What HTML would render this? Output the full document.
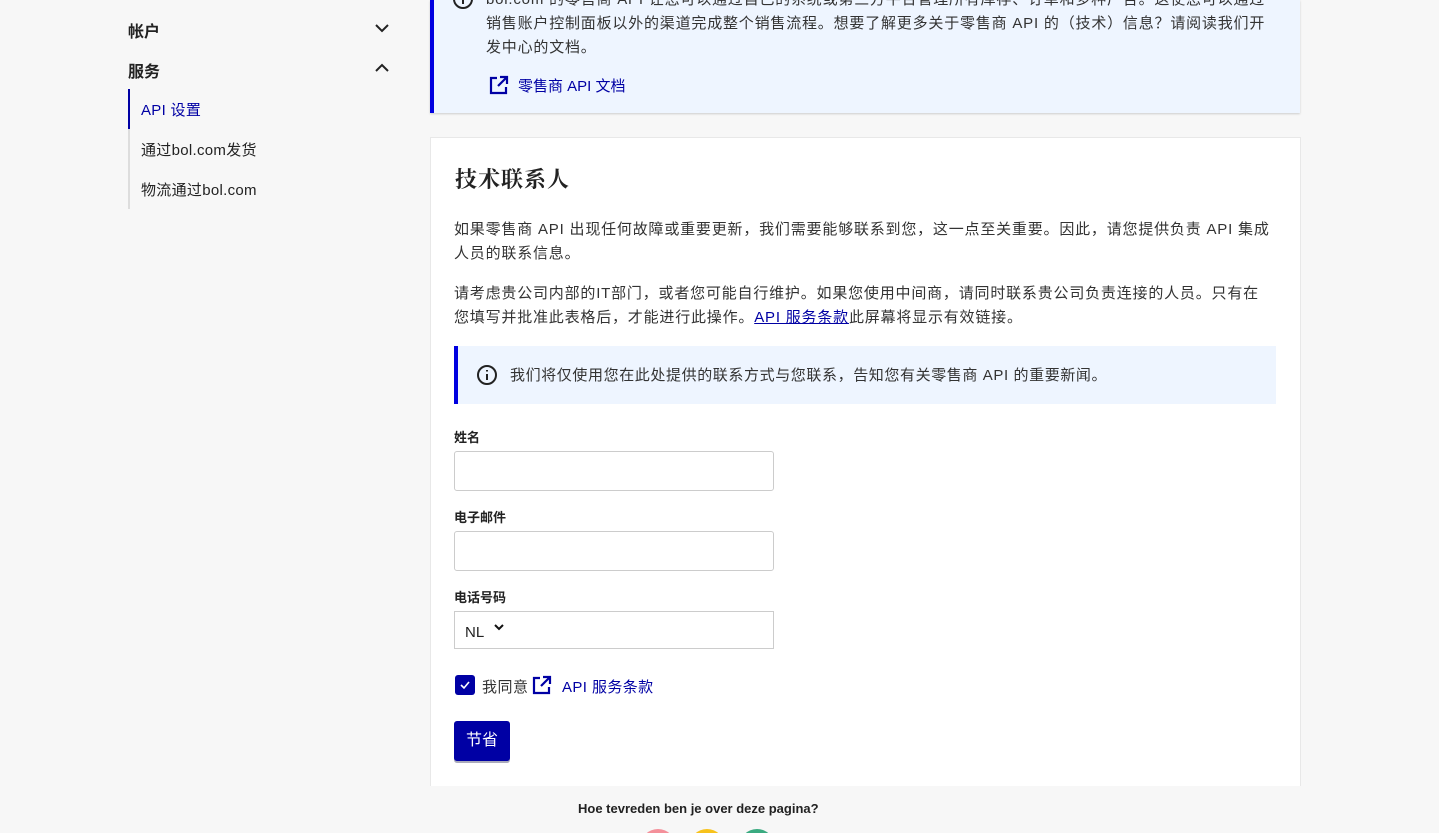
<!DOCTYPE html><html style="overflow:hidden;height:833px"><head><meta charset="utf-8"><style>
body{margin:0;width:1439px;height:833px;background:#f7f7f7;font-family:"Liberation Sans","Noto Sans CJK SC",sans-serif;color:#333;overflow:hidden;position:relative;font-size:15px}
.a{position:absolute}
.side div{position:absolute;left:141px;font-size:15px;color:#222;letter-spacing:0.3px}
.note{left:430px;top:0;width:866px;height:113px;background:#eef5ff;border-left:4px solid #0000e0;box-shadow:0 1px 2px #ccc}
.card{left:430px;top:137px;width:869px;height:648px;background:#fff;border:1px solid #e8e8e8;border-bottom:none}
p{margin:0;line-height:24px;letter-spacing:0.8px}
.lbl{font-size:13px;font-weight:bold;color:#222}
.inp{width:318px;height:38px;border:1px solid #ccc;border-radius:3px;background:#fff}
a{color:#0000a4}
</style></head><body>
<div class="a" style="left:128px;top:18px;font-size:16px;font-weight:bold;color:#222">帐户</div>
<svg class="a" style="left:374px;top:22px" width="16" height="12"><path d="M2 3l6 6 6-6" stroke="#222" stroke-width="2" fill="none"/></svg>
<div class="a" style="left:128px;top:58px;font-size:16px;font-weight:bold;color:#222">服务</div>
<svg class="a" style="left:374px;top:62px" width="16" height="12"><path d="M2 9l6-6 6 6" stroke="#222" stroke-width="2" fill="none"/></svg>
<div class="a" style="left:128px;top:89px;width:2px;height:120px;background:#ddd"></div>
<div class="a" style="left:128px;top:89px;width:2px;height:40px;background:#0000a4"></div>
<div class="side"><div style="top:99px;color:#0000a4">API 设置</div><div style="top:139px">通过bol.com发货</div><div style="top:179px">物流通过bol.com</div></div>
<div class="a note">
<svg class="a" style="left:18px;top:-12px" width="22" height="22"><circle cx="11" cy="11" r="9" stroke="#222" stroke-width="2" fill="none"/><path d="M11 10v6M11 6v1.5" stroke="#222" stroke-width="2"/></svg>
<p class="a" style="left:52px;top:-12px;width:792px;color:#333">bol.com 的零售商 API 让您可以通过自己的系统或第三方平台管理所有库存、订单和多种广告。这使您可以通过销售账户控制面板以外的渠道完成整个销售流程。想要了解更多关于零售商 API 的（技术）信息？请阅读我们开发中心的文档。</p>
<svg class="a" style="left:54px;top:74px" width="22" height="22"><path d="M9 4H3v15h15v-6M12 3h7v7M19 3l-9 9" stroke="#0000a4" stroke-width="2.2" fill="none"/></svg>
<div class="a" style="left:84px;top:75px;color:#0000a4">零售商 API 文档</div>
</div>
<div class="a card">
<div class="a" style="left:24px;top:25px;font-size:22px;font-weight:bold;font-family:'Noto Serif CJK SC',serif;color:#222;letter-spacing:1px">技术联系人</div>
<p class="a" style="left:23px;top:80px;width:825px">如果零售商 API 出现任何故障或重要更新，我们需要能够联系到您，这一点至关重要。因此，请您提供负责 API 集成人员的联系信息。</p>
<p class="a" style="left:23px;top:144px;width:812px">请考虑贵公司内部的IT部门，或者您可能自行维护。如果您使用中间商，请同时联系贵公司负责连接的人员。只有在您填写并批准此表格后，才能进行此操作。<a href="#">API 服务条款</a>此屏幕将显示有效链接。</p>
<div class="a" style="left:23px;top:208px;width:818px;height:58px;background:#eef5ff;border-left:4px solid #0000e0">
<svg class="a" style="left:18px;top:18px" width="22" height="22"><circle cx="11" cy="11" r="9" stroke="#222" stroke-width="2" fill="none"/><path d="M11 10v6M11 6v1.5" stroke="#222" stroke-width="2"/></svg>
<div class="a" style="left:52px;top:18px;letter-spacing:0.6px">我们将仅使用您在此处提供的联系方式与您联系，告知您有关零售商 API 的重要新闻。</div></div>
<div class="a lbl" style="left:23px;top:289px">姓名</div><div class="a inp" style="left:23px;top:313px"></div>
<div class="a lbl" style="left:23px;top:369px">电子邮件</div><div class="a inp" style="left:23px;top:393px"></div>
<div class="a lbl" style="left:23px;top:449px">电话号码</div><div class="a inp" style="left:23px;top:473px;border-radius:0;height:36px"><span class="a" style="left:10px;top:12px;color:#222">NL</span><svg class="a" style="left:38px;top:10px" width="12" height="10"><path d="M2 3l4 4 4-4" stroke="#111" stroke-width="2" fill="none"/></svg></div>
<div class="a" style="left:24px;top:537px;width:20px;height:20px;background:#0000a4;border-radius:3px"><svg width="20" height="20"><path d="M6 10l3 3 5-6" stroke="#fff" stroke-width="1.6" fill="none"/></svg></div>
<div class="a" style="left:51px;top:538px;letter-spacing:0.5px">我同意</div>
<svg class="a" style="left:100px;top:536px" width="22" height="22"><path d="M9 4H3v15h15v-6M12 3h7v7M19 3l-9 9" stroke="#0000a4" stroke-width="2.2" fill="none"/></svg>
<div class="a" style="left:131px;top:538px;color:#0000a4;letter-spacing:0.4px">API 服务条款</div>
<div class="a" style="left:23px;top:583px;width:56px;height:40px;background:#0000a4;border-radius:3px;color:#fff;text-align:center;line-height:40px;box-shadow:0 2px 0 #aab;font-size:16px">节省</div>
</div>
<div class="a" style="left:578px;top:801px;font-size:13px;font-weight:bold;color:#222">Hoe tevreden ben je over deze pagina?</div>
<div class="a" style="left:640px;top:829px;width:36px;height:36px;border-radius:50%;background:#f4909a"></div>
<div class="a" style="left:689px;top:829px;width:36px;height:36px;border-radius:50%;background:#f7c21c"></div>
<div class="a" style="left:739px;top:829px;width:36px;height:36px;border-radius:50%;background:#3aaa80"></div>
</body></html>
